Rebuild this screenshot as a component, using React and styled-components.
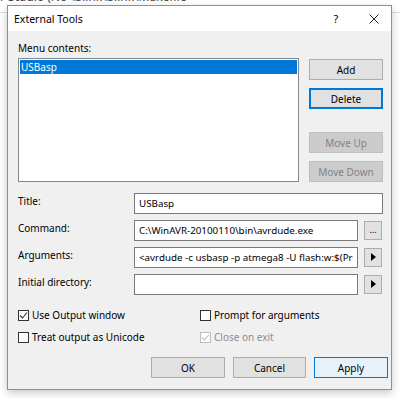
import React from 'react';
import styled, { createGlobalStyle } from 'styled-components';

const GlobalStyle = createGlobalStyle`
    html, body {
        margin: 0;
        padding: 0;
        background: #ffffff;
    }
    body {
        font-family: "Noto Sans", "Open Sans", sans-serif;
        font-size: 10px;
        color: #000000;
    }
`;

const Desktop = styled.div`
    position: relative;
    width: 400px;
    height: 398px;
    overflow: hidden;
    background: #ffffff;
`;

const BackBar = styled.div`
    height: 12px;
    border-bottom: 1px solid #dedede;
    overflow: hidden;
`;

const BackTitle = styled.div`
    margin-top: -10px;
    font-size: 12px;
    line-height: 14px;
    color: #444444;
    white-space: nowrap;
`;

const Dialog = styled.div`
    position: absolute;
    left: 7px;
    top: 5px;
    width: 385px;
    height: 385px;
    box-sizing: border-box;
    border: 1px solid #5b9bd8;
    background: #f0f0f0;
    display: flex;
    flex-direction: column;
    box-shadow: 0 3px 8px rgba(0, 0, 0, 0.22);
`;

const TitleBar = styled.div`
    height: 25px;
    background: #ffffff;
    display: flex;
    align-items: center;
    padding-left: 6px;
`;

const TitleText = styled.div`
    flex: 1;
    font-size: 10.5px;
`;

const TitleButton = styled.div`
    width: ${({ $w }) => $w}px;
    height: 25px;
    display: flex;
    align-items: center;
    justify-content: center;
    font-size: 11px;
`;

const Body = styled.div`
    flex: 1;
    padding: 10px 0 0 10px;
    display: flex;
    flex-direction: column;
`;

const Label = styled.div`
    line-height: 14px;
    white-space: nowrap;
`;

const ListRow = styled.div`
    display: flex;
    gap: 10px;
    margin-top: 3px;
`;

const ListBox = styled.div`
    width: 281px;
    height: 124px;
    box-sizing: border-box;
    border: 1px solid #828790;
    background: #ffffff;
    padding: 1px;
`;

const ListItem = styled.div`
    height: 14px;
    line-height: 14px;
    padding-left: 1px;
    background: ${({ $selected }) => ($selected ? '#0078d7' : 'transparent')};
    color: ${({ $selected }) => ($selected ? '#ffffff' : '#000000')};
`;

const SideButtons = styled.div`
    display: flex;
    flex-direction: column;
    padding-top: 1px;
`;

const Button = styled.div`
    width: ${({ $w }) => $w || 74}px;
    height: 21px;
    box-sizing: border-box;
    margin-top: ${({ $mt }) => $mt || 0}px;
    display: flex;
    align-items: center;
    justify-content: center;
    border: 1px solid ${({ $variant }) =>
        $variant === 'focus' || $variant === 'default'
            ? '#0078d7'
            : $variant === 'disabled'
            ? '#bfbfbf'
            : '#adadad'};
    background: ${({ $variant }) =>
        $variant === 'default' ? '#e5f1fb' : $variant === 'disabled' ? '#cccccc' : '#e1e1e1'};
    color: ${({ $variant }) => ($variant === 'disabled' ? '#838383' : '#000000')};
    box-shadow: ${({ $variant }) => ($variant === 'focus' ? 'inset 0 0 0 1px #0078d7' : 'none')};
    white-space: nowrap;
`;

const Form = styled.div`
    display: flex;
    flex-direction: column;
    gap: 6px;
    margin-top: 11px;
`;

const FormRow = styled.div`
    display: flex;
    align-items: flex-start;
    height: 21px;
`;

const FormLabel = styled(Label)`
    width: 116px;
    padding-top: 1px;
`;

const Field = styled.input`
    width: ${({ $w }) => $w}px;
    height: 21px;
    box-sizing: border-box;
    border: 1px solid #7a7a7a;
    background: #ffffff;
    padding: 0 4px;
    margin: 0;
    font: inherit;
    font-size: 9.8px;
    color: #000000;
    outline: none;
`;

const SmallButton = styled.div`
    width: 18px;
    height: 19px;
    margin-left: 6px;
    margin-top: 1px;
    box-sizing: border-box;
    border: 1px solid #adadad;
    background: #e1e1e1;
    display: flex;
    align-items: center;
    justify-content: center;
    font-size: 9px;
    line-height: 9px;
    padding-bottom: 2px;
`;

const Checks = styled.div`
    display: grid;
    grid-template-columns: 182px 1fr;
    row-gap: 8px;
    margin-top: 13px;
`;

const CheckItem = styled.div`
    display: flex;
    align-items: center;
    gap: 3px;
    height: 14px;
    color: ${({ $disabled }) => ($disabled ? '#8d8d8d' : '#000000')};
    white-space: nowrap;
`;

const Box = styled.div`
    width: 11px;
    height: 11px;
    box-sizing: border-box;
    border: 1px solid ${({ $disabled }) => ($disabled ? '#bcbcbc' : '#333333')};
    background: #ffffff;
    display: flex;
    align-items: center;
    justify-content: center;
`;

const Footer = styled.div`
    display: flex;
    justify-content: flex-end;
    gap: 8px;
    margin-top: 13px;
    padding-right: 3px;
`;

const Check = ({ checked, disabled, children }) => (
    <CheckItem $disabled={disabled}>
        <Box $disabled={disabled}>
            {checked && (
                <svg width="9" height="9" viewBox="0 0 9 9">
                    <polyline
                        points="1,4.5 3.5,7 8,1.5"
                        fill="none"
                        stroke={disabled ? '#bcbcbc' : '#333333'}
                        strokeWidth="1.1"
                    />
                </svg>
            )}
        </Box>
        {children}
    </CheckItem>
);

const Arrow = () => (
    <svg width="5" height="8" viewBox="0 0 5 8">
        <polygon points="0,0 5,4 0,8" fill="#000000" />
    </svg>
);

const App = () => {
    return (
        <Desktop>
            <GlobalStyle />
            <BackBar>
                <BackTitle>r Studio (No \blink\blink\Makefile</BackTitle>
            </BackBar>
            <Dialog>
                <TitleBar>
                    <TitleText>External Tools</TitleText>
                    <TitleButton $w={42}>?</TitleButton>
                    <TitleButton $w={34}>
                        <svg width="10" height="10" viewBox="0 0 10 10">
                            <path d="M0.5 0.5 L9.5 9.5 M9.5 0.5 L0.5 9.5" stroke="#222222" strokeWidth="1" />
                        </svg>
                    </TitleButton>
                </TitleBar>
                <Body>
                    <Label>Menu contents:</Label>
                    <ListRow>
                        <ListBox>
                            <ListItem $selected>USBasp</ListItem>
                        </ListBox>
                        <SideButtons>
                            <Button>Add</Button>
                            <Button $mt={8} $variant="focus">Delete</Button>
                            <Button $mt={23} $variant="disabled">Move Up</Button>
                            <Button $mt={8} $variant="disabled">Move Down</Button>
                        </SideButtons>
                    </ListRow>
                    <Form>
                        <FormRow>
                            <FormLabel>Title:</FormLabel>
                            <Field $w={249} readOnly value="USBasp" />
                        </FormRow>
                        <FormRow>
                            <FormLabel>Command:</FormLabel>
                            <Field $w={224} readOnly value="C:\WinAVR-20100110\bin\avrdude.exe" />
                            <SmallButton>...</SmallButton>
                        </FormRow>
                        <FormRow>
                            <FormLabel>Arguments:</FormLabel>
                            <Field
                                $w={224}
                                readOnly
                                value="<avrdude -c usbasp -p atmega8 -U flash:w:$(ProjectDir)\default\$(TargetName).hex:i"
                            />
                            <SmallButton>
                                <Arrow />
                            </SmallButton>
                        </FormRow>
                        <FormRow>
                            <FormLabel>Initial directory:</FormLabel>
                            <Field $w={224} readOnly value="" />
                            <SmallButton>
                                <Arrow />
                            </SmallButton>
                        </FormRow>
                    </Form>
                    <Checks>
                        <Check checked>Use Output window</Check>
                        <Check>Prompt for arguments</Check>
                        <Check>Treat output as Unicode</Check>
                        <Check checked disabled>Close on exit</Check>
                    </Checks>
                    <Footer>
                        <Button>OK</Button>
                        <Button $w={73}>Cancel</Button>
                        <Button $variant="default">Apply</Button>
                    </Footer>
                </Body>
            </Dialog>
        </Desktop>
    );
};

export default App;
